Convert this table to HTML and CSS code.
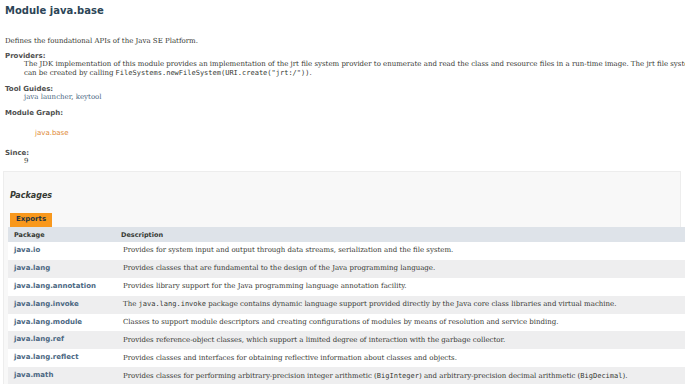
FILE: index.html
```html
<!DOCTYPE html>
<html>
<head>
    <title>java.base</title>
    <meta charset="UTF-8">
    <link rel="stylesheet" href="styles.css">
</head>
<body>
    <main class="page">
        <div class="header">
            <h1 class="title">Module java.base</h1>
        </div>

        <section class="module-description">
            <div class="block">Defines the foundational APIs of the Java SE Platform.</div>
            <dl class="notes">
                <dt>Providers:</dt>
                <dd>The JDK implementation of this module provides an implementation of the jrt file system provider to enumerate and read the class and resource files in a run-time image. The jrt file system can be created by calling <code>FileSystems.newFileSystem(URI.create("jrt:/"))</code>.</dd>
                <dt>Tool Guides:</dt>
                <dd><a href="#">java launcher</a>, <a href="#">keytool</a></dd>
                <dt>Module Graph:</dt>
                <dd class="graph"><span class="graph-node">java.base</span></dd>
                <dt>Since:</dt>
                <dd>9</dd>
            </dl>
        </section>

        <section class="packages-summary">
            <h2>Packages</h2>
            <div class="caption"><span>Exports</span></div>
            <table class="summary-table">
                <thead>
                    <tr>
                        <th class="col-first">Package</th>
                        <th class="col-last">Description</th>
                    </tr>
                </thead>
                <tbody>
                    <tr class="even-row">
                        <td class="col-first"><a href="#">java.io</a></td>
                        <td class="col-last">Provides for system input and output through data streams, serialization and the file system.</td>
                    </tr>
                    <tr class="odd-row">
                        <td class="col-first"><a href="#">java.lang</a></td>
                        <td class="col-last">Provides classes that are fundamental to the design of the Java programming language.</td>
                    </tr>
                    <tr class="even-row">
                        <td class="col-first"><a href="#">java.lang.annotation</a></td>
                        <td class="col-last">Provides library support for the Java programming language annotation facility.</td>
                    </tr>
                    <tr class="odd-row">
                        <td class="col-first"><a href="#">java.lang.invoke</a></td>
                        <td class="col-last">The <code>java.lang.invoke</code> package contains dynamic language support provided directly by the Java core class libraries and virtual machine.</td>
                    </tr>
                    <tr class="even-row">
                        <td class="col-first"><a href="#">java.lang.module</a></td>
                        <td class="col-last">Classes to support module descriptors and creating configurations of modules by means of resolution and service binding.</td>
                    </tr>
                    <tr class="odd-row">
                        <td class="col-first"><a href="#">java.lang.ref</a></td>
                        <td class="col-last">Provides reference-object classes, which support a limited degree of interaction with the garbage collector.</td>
                    </tr>
                    <tr class="even-row">
                        <td class="col-first"><a href="#">java.lang.reflect</a></td>
                        <td class="col-last">Provides classes and interfaces for obtaining reflective information about classes and objects.</td>
                    </tr>
                    <tr class="odd-row">
                        <td class="col-first"><a href="#">java.math</a></td>
                        <td class="col-last">Provides classes for performing arbitrary-precision integer arithmetic (<code>BigInteger</code>) and arbitrary-precision decimal arithmetic (<code>BigDecimal</code>).</td>
                    </tr>
                </tbody>
            </table>
        </section>
    </main>
</body>
</html>
```

FILE: styles.css
```css
:root {
    --text: #353833;
    --heading: #2c4557;
    --note-title: #4e4e4e;
    --link: #4a6782;
    --tab: #f8981d;
    --tab-text: #253441;
    --header-bg: #dee3e9;
    --odd-bg: #eeeeef;
    --section-bg: #f8f8f8;
    --section-border: #ededed;
}

* {
    margin: 0;
    padding: 0;
    box-sizing: border-box;
}

body {
    font-family: 'DejaVu Serif', Georgia, serif;
    font-size: 7px;
    color: var(--text);
    background: #ffffff;
    overflow: hidden;
}

a {
    color: var(--link);
    text-decoration: none;
}

code {
    font-family: 'DejaVu Sans Mono', monospace;
    font-size: 7px;
}

.page {
    width: 700px;
    padding: 0 0 0 5px;
}

.header {
    padding: 5px 0 0 0;
}

.title {
    font-family: 'DejaVu Sans', Arial, sans-serif;
    font-size: 10px;
    font-weight: bold;
    color: var(--heading);
    line-height: 12px;
}

.module-description {
    padding-top: 20px;
}

.block {
    line-height: 9px;
}

.notes dt {
    font-family: 'DejaVu Sans', Arial, sans-serif;
    font-size: 7px;
    font-weight: bold;
    color: var(--note-title);
    margin-top: 6px;
    line-height: 8px;
}

.notes dd {
    margin: 0 5px 7px 19px;
    line-height: 9px;
}

.notes dd:last-child {
    margin-bottom: 5px;
}

.notes dd.graph {
    padding: 12px 0 4px 11px;
}

.graph-node {
    font-family: 'DejaVu Sans', Arial, sans-serif;
    font-size: 7px;
    color: #e08a35;
}

.packages-summary {
    width: 678px;
    margin: 5px 0 0 -2px;
    padding: 18px 0 0 4px;
    background: var(--section-bg);
    border: 1px solid var(--section-border);
    border-bottom: none;
}

.packages-summary h2 {
    font-family: 'DejaVu Sans', Arial, sans-serif;
    font-size: 8px;
    font-style: italic;
    font-weight: bold;
    color: var(--text);
    line-height: 11px;
    padding-left: 2px;
    margin-bottom: 12px;
}

.caption {
    display: flex;
    padding-left: 2px;
}

.caption span {
    font-family: 'DejaVu Sans', Arial, sans-serif;
    font-size: 7px;
    font-weight: bold;
    color: var(--tab-text);
    background: var(--tab);
    padding: 3px 6px 4px 6px;
    line-height: 7px;
}

.summary-table {
    width: 720px;
    border-collapse: collapse;
}

.summary-table th {
    font-family: 'DejaVu Sans', Arial, sans-serif;
    font-size: 6.5px;
    font-weight: bold;
    text-align: left;
    background: var(--header-bg);
    padding: 0 6px;
    height: 15px;
}

.summary-table td {
    height: 17.9px;
    padding: 0 6px;
    vertical-align: middle;
}

.summary-table .col-first {
    width: 107px;
}

td.col-first {
    font-family: 'DejaVu Sans', Arial, sans-serif;
    font-size: 7px;
    font-weight: bold;
    padding-bottom: 2px;
}

td.col-last {
    line-height: 9px;
    padding-left: 8px;
}

.even-row {
    background: #ffffff;
}

.odd-row {
    background: var(--odd-bg);
}
```
